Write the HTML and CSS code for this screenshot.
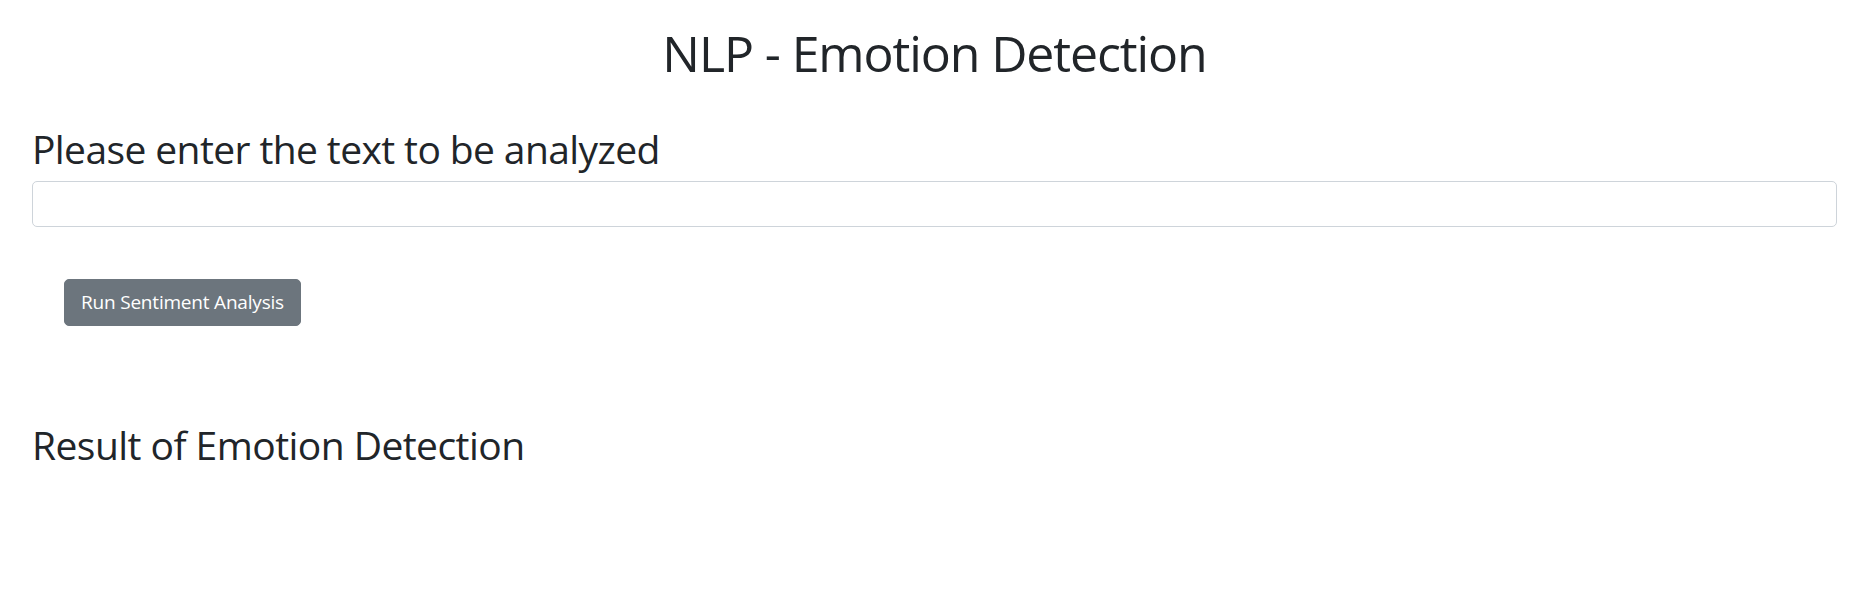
FILE: index.html
```html
<!DOCTYPE html>
<html lang="en">
<head>
<meta charset="utf-8">
<title>NLP - Emotion Detection</title>
<link rel="stylesheet" href="styles.css">
</head>
<body>
<div class="container">
  <h1 class="title">NLP - Emotion Detection</h1>
  <h2 class="label">Please enter the text to be analyzed</h2>
  <input class="text-input" type="text">
  <div class="actions">
    <button class="btn" type="button">Run Sentiment Analysis</button>
  </div>
  <h2 class="result">Result of Emotion Detection</h2>
</div>
</body>
</html>
```
FILE: styles.css
```css
html, body {
  margin: 0;
  padding: 0;
  background: #fff;
}
body {
  font-family: "Open Sans", "Noto Sans", sans-serif;
  color: #212529;
}
.container {
  padding: 0 17px 0 32px;
  display: flex;
  flex-direction: column;
}
.title {
  margin: 22px 0 0;
  font-size: 50px;
  line-height: 62px;
  font-weight: 400;
  letter-spacing: -1.1px;
  text-align: center;
}
.label {
  margin: 41px 0 0;
  font-size: 39px;
  line-height: 48px;
  font-weight: 400;
  letter-spacing: -0.6px;
}
.text-input {
  margin-top: 8px;
  height: 46px;
  box-sizing: border-box;
  border: 1px solid #ced4da;
  border-radius: 5px;
  background: #fff;
  font: inherit;
  font-size: 20px;
  padding: 0 15px;
}
.actions {
  margin-top: 52px;
  padding-left: 32px;
  display: flex;
}
.btn {
  height: 47px;
  box-sizing: border-box;
  padding: 0 16px;
  border: 1px solid #6c757d;
  border-radius: 5px;
  background: #6c757d;
  color: #fff;
  font-family: inherit;
  font-size: 19px;
  letter-spacing: -0.2px;
  line-height: 1;
}
.result {
  margin: 95px 0 0;
  font-size: 39px;
  line-height: 48px;
  font-weight: 400;
  letter-spacing: -0.55px;
}
```
